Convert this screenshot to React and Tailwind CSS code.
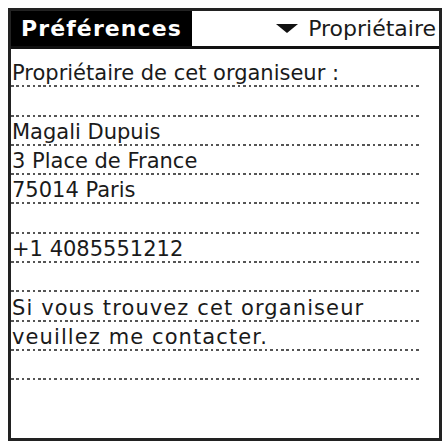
const rows = [
  'Propriétaire de cet organiseur :',
  '',
  'Magali Dupuis',
  '3 Place de France',
  '75014 Paris',
  '',
  '+1 4085551212',
  '',
  'Si vous trouvez cet organiseur',
  'veuillez me contacter.',
  '',
];

function Row({ text, wide }) {
  return (
    <div className="flex h-[29.3px] flex-col justify-end">
      <div
        className={`pl-[1px] text-[21px] leading-[24px] text-[#1a1a1a] whitespace-nowrap ${
          wide ? 'tracking-[1.1px]' : 'tracking-[0px]'
        }`}
      >
        {text || '\u00a0'}
      </div>
      <div className="h-[2px] w-[408px] bg-[repeating-linear-gradient(90deg,#555_0_2.7px,transparent_2.7px_5.4px)]" />
    </div>
  );
}

export default function App() {
  return (
    <div
      className="h-[443px] w-[445px] bg-white pl-[8px] pt-[8px]"
      style={{ fontFamily: '"DejaVu Sans", "Liberation Sans", sans-serif' }}
    >
      <div className="h-[433px] w-[434px] border-[3px] border-[#222] bg-white">
        <div className="flex h-[38px] border-b-[3px] border-[#111]">
          <div className="flex w-[181px] items-center bg-black pl-[10px] text-[22px] font-bold tracking-[1.1px] text-white">
            Préférences
          </div>
          <div className="flex flex-1 items-center justify-end gap-[10px] pr-[3px] text-[22px] text-[#1a1a1a]">
            <svg width="22" height="9" viewBox="0 0 22 9">
              <polygon points="0,0 22,0 11,9" fill="#111" />
            </svg>
            <span>Propriétaire</span>
          </div>
        </div>
        <div className="pt-[9px]">
          {rows.map((t, i) => (
            <Row key={i} text={t} wide={i >= 8} />
          ))}
        </div>
      </div>
    </div>
  );
}
